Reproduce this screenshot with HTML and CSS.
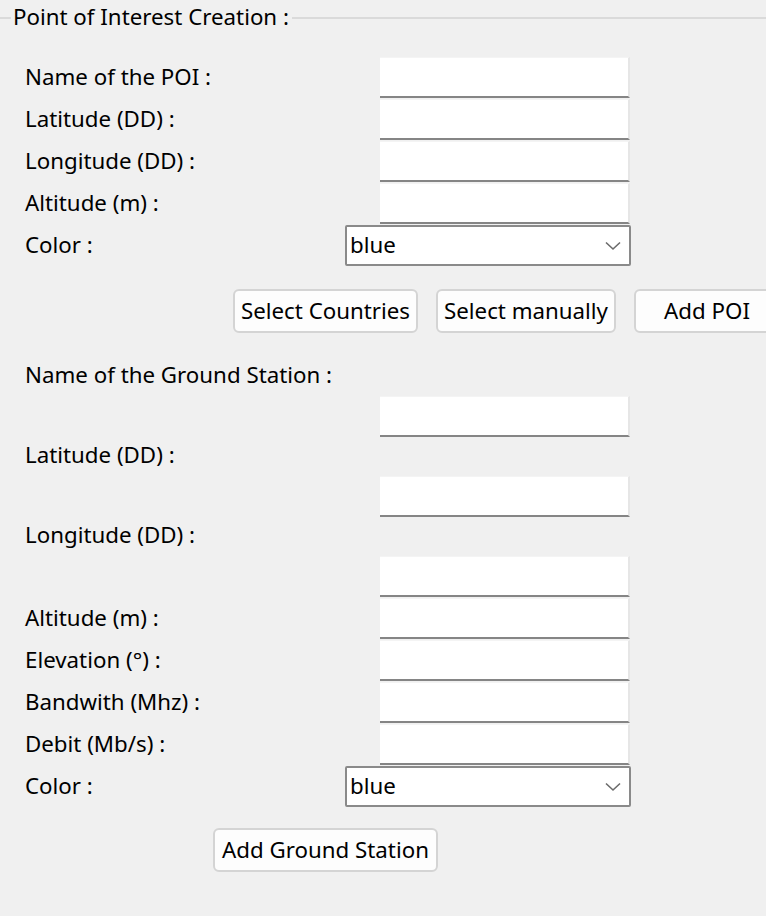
FILE: index.html
```html
<!DOCTYPE html>
<html lang="en">
<head>
<meta charset="utf-8">
<title>Point of Interest Creation</title>
<link rel="stylesheet" href="styles.css">
</head>
<body>
<div class="frame">
  <div class="legend">
    <span class="seg seg-left"></span>
    <span class="legend-text">Point of Interest Creation :</span>
    <span class="seg seg-right"></span>
  </div>

  <div class="form form-poi">
    <label class="lbl">Name of the POI :</label>
    <input class="entry" type="text">
    <label class="lbl">Latitude (DD) :</label>
    <input class="entry" type="text">
    <label class="lbl">Longitude (DD) :</label>
    <input class="entry" type="text">
    <label class="lbl">Altitude (m) :</label>
    <input class="entry" type="text">
    <label class="lbl">Color :</label>
    <div class="combo"><span>blue</span><svg class="chev" width="16" height="10" viewBox="0 0 16 10"><polyline points="1,1.5 8,8 15,1.5" fill="none" stroke="#6b6b6b" stroke-width="1.6"/></svg></div>
  </div>

  <div class="btn-row">
    <button class="btn btn-countries">Select Countries</button>
    <button class="btn btn-manual">Select manually</button>
    <button class="btn btn-add">Add POI</button>
  </div>

  <div class="form form-gs">
    <label class="lbl">Name of the Ground Station :</label>
    <span></span>
    <span></span>
    <input class="entry" type="text">
    <label class="lbl">Latitude (DD) :</label>
    <span></span>
    <span></span>
    <input class="entry" type="text">
    <label class="lbl">Longitude (DD) :</label>
    <span></span>
    <span></span>
    <input class="entry" type="text">
    <label class="lbl">Altitude (m) :</label>
    <input class="entry" type="text">
    <label class="lbl">Elevation (°) :</label>
    <input class="entry" type="text">
    <label class="lbl">Bandwith (Mhz) :</label>
    <input class="entry" type="text">
    <label class="lbl">Debit (Mb/s) :</label>
    <input class="entry" type="text">
    <label class="lbl">Color :</label>
    <div class="combo"><span>blue</span><svg class="chev" width="16" height="10" viewBox="0 0 16 10"><polyline points="1,1.5 8,8 15,1.5" fill="none" stroke="#6b6b6b" stroke-width="1.6"/></svg></div>
  </div>

  <div class="btn-row btn-row-gs">
    <button class="btn btn-gs">Add Ground Station</button>
  </div>
</div>
</body>
</html>
```

FILE: styles.css
```css
html, body {
  margin: 0;
  padding: 0;
  background: #f0f0f0;
  overflow: hidden;
}

body {
  width: 766px;
  height: 916px;
  font-family: "Noto Sans", "Open Sans", sans-serif;
  font-size: 22.3px;
  color: #000;
}

.frame {
  width: 766px;
  overflow: hidden;
}

.legend {
  display: flex;
  align-items: center;
  height: 36px;
}

.seg {
  height: 2px;
  background: #dadada;
}

.seg-left {
  width: 11px;
  flex: none;
}

.seg-right {
  flex: 1;
}

.legend-text {
  padding: 0 3px 2px 2px;
  line-height: 1;
  white-space: nowrap;
}

.form {
  display: grid;
  grid-template-columns: 319px 287px;
  padding-left: 25px;
  align-items: center;
}

.form-poi {
  margin-top: 21px;
  grid-template-rows: 42px 42px 42px 42px 41px;
}

.form-gs {
  margin-top: 23px;
  grid-template-rows: 40px 40px 40px 40px 40px 42px 42px 42px 42px 42px 41px;
}

.lbl {
  white-space: nowrap;
  line-height: 1.2;
  align-self: center;
  padding-bottom: 1px;
}

.entry {
  grid-column: 2;
  justify-self: end;
  align-self: start;
  width: 250px;
  height: 41px;
  margin: 0 1px 0 0;
  padding: 0 4px;
  box-sizing: border-box;
  background: #fff;
  border: none;
  border-top: 1px solid #f4f4f4;
  border-right: 2px solid #e6e6e6;
  border-bottom: 2px solid #858585;
  border-radius: 0;
  font: inherit;
  outline: none;
  -webkit-appearance: none;
  appearance: none;
}

.combo {
  grid-column: 2;
  align-self: start;
  display: flex;
  align-items: center;
  justify-content: space-between;
  height: 41px;
  box-sizing: border-box;
  margin-left: 1px;
  padding: 0 8px 0 3px;
  background: #fff;
  border: 2px solid #8a8a8a;
  border-radius: 2px;
  line-height: 1;
}

.chev {
  display: block;
  margin-top: 1px;
}

.btn-row {
  display: flex;
  gap: 18px;
  margin-top: 23px;
  padding-left: 233px;
  height: 44px;
}

.btn {
  flex: none;
  height: 44px;
  box-sizing: border-box;
  padding: 0;
  background: #fdfdfd;
  border: 2px solid #d4d4d4;
  border-radius: 6px;
  font: inherit;
  color: #000;
  line-height: 1;
  text-align: center;
}

.btn-countries {
  width: 185px;
}

.btn-manual {
  width: 180px;
}

.btn-add {
  width: 146px;
}

.btn-row-gs {
  margin-top: 21px;
  padding-left: 213px;
}

.btn-gs {
  width: 225px;
}
```
